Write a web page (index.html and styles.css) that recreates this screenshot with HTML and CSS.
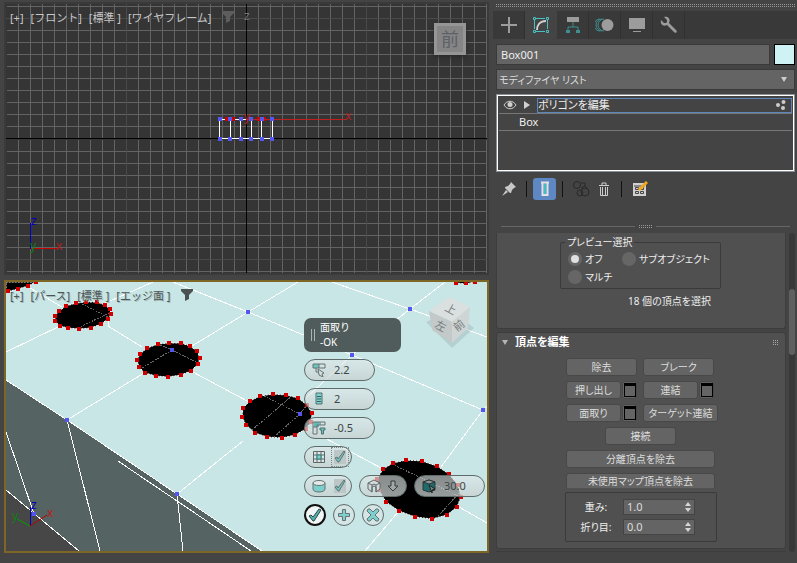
FILE: index.html
```html
<!DOCTYPE html>
<html lang="ja">
<head>
    <meta charset="UTF-8">
    <meta name="viewport" content="width=device-width, initial-scale=1.0">
    <title>ポリゴンを編集</title>
    <link rel="stylesheet" href="styles.css">
</head>
<body>
    <main class="viewports">
        <section class="viewport">
            <svg class="scene" viewBox="6 4 481 269" preserveAspectRatio="xMinYMin slice" shape-rendering="crispEdges">
                <defs>
                    <pattern id="grid-top" x="6" y="6" width="12" height="12" patternUnits="userSpaceOnUse">
                        <path d="M0 0h12v1H1v11H0z" fill="#636363"/>
                    </pattern>
                    <pattern id="grid-bottom" x="6" y="7" width="12" height="12" patternUnits="userSpaceOnUse">
                        <path d="M0 0h12v1H1v11H0z" fill="#636363"/>
                    </pattern>
                </defs>
                <rect x="7" y="4" width="480" height="135" fill="url(#grid-top)"/>
                <rect x="7" y="140" width="480" height="133" fill="url(#grid-bottom)"/>
                <path d="M126.5 4v269M366.5 4v269M6 18.5h481M6 259.5h481" stroke="#4a4a4a"/>
                <path d="M246.5 4v269M6 138.5h481" stroke="#000"/>
                <!-- box wireframe -->
                <path d="M219.5 119.5h53M219.5 138.5h53M219.5 119v20M230.5 119v20M240.5 119v20M251.5 119v20M261.5 119v20M272.5 119v20" stroke="#fff" fill="none"/>
                <path d="M225 119h10M257 119h9" stroke="#d00000" stroke-width="4"/>
                <path d="M246 119.5h100" stroke="#c02020"/>
                <path d="M220 119h0M230 119h0M241 119h0M251 119h0M262 119h0M272 119h0M220 138.5h0M230 138.5h0M241 138.5h0M251 138.5h0M262 138.5h0M272 138.5h0" class="vertex"/>
                <text x="244" y="121" class="axis red">y</text>
                <text x="345" y="120" class="axis red">x</text>
                <text x="244" y="20" class="axis grey">z</text>
                <path d="M30.5 223v26" stroke="#0000c8"/>
                <path d="M31 248.5h26" stroke="#c80000"/>
                <text x="31" y="225" class="axis blue">z</text>
                <text x="30" y="250" class="axis green">y</text>
                <text x="56" y="250" class="axis red">x</text>
            </svg>
            <div class="label">
                <span>[+]</span><span>[フロント]</span><span>[標準 ]</span><span>[ワイヤフレーム]</span>
                <svg width="12" height="12" viewBox="0 0 12 12"><path d="M0 0h12v2L8 6v4l-4 2V6L0 2z" fill="#5d5d5d"/></svg>
            </div>
            <div class="front-cube">前</div>
        </section>

        <section class="viewport active">
            <svg class="scene" viewBox="6 282 481 269" preserveAspectRatio="xMinYMin slice">
                <path d="M6 282h481v269H262L6 380z" fill="#c8e6e6"/>
                <path d="M6 380l256 171H79L6 490z" fill="#566363"/>
                <path d="M6 490l73 61H6z" fill="#474747"/>
                <g class="edges">
                    <path d="M6 380l61 40 110 74 85 57M6 490l73 61M118 461l133 90M67 420l33 131M177 494l6 57M6 432l28 82"/>
                    <path d="M30 288l32 19M101 305l52-23M60 326L6 352M108 320v6l34 21M192 346l56-34 50-30M173 282l75 30 104 43 131 55 4-4M332 282l78 27 77 28M352 355l58-46 35-27M352 355l-46 43M144 373l-77 47M191 371l58 31M243 441l-66 53M308 429l75 40M483 410l-42 57M459 507l28 16M399 511l-34 40"/>
                </g>
                <g fill="#000" stroke="#fff" stroke-dasharray="2 1">
                    <path d="M6 292l12-3 10-3 8-4H6z"/>
                    <path d="M453 281l3 2 10 1 9-2z"/>
                    <path d="M59 311l7-5 10-3 10-1h11l8 3 5 4 1 5-3 5-7 5-10 4-12 1-11-1-8-2-5-5v-5z"/>
                    <path d="M137 360l3-6 7-6 11-4 11-1h12l9 3 7 5 3 7-2 6-7 7-10 4-13 2-12-1-11-3-6-6z"/>
                    <path d="M243 408l7-7 10-5 13-2 13 1 12 3 9 7 5 8-1 9-5 7-11 6-13 3-15-1-12-4-9-8-4-8z"/>
                    <path d="M383 469l10-6 13-3 16 1 15 5 12 8 9 11 3 12-4 10-10 8-15 4-17-2-16-6-13-9-7-12-2-11z"/>
                </g>
                <path class="under" d="M82 304l26 13M78 328l31-15M160 345l12 5 26 13M172 350l-30 18M264 396l36 18M252 430l40-34M274 437l26-23 7-9M392 464l66 32M438 516l22-24"/>
                <path class="picked" d="M8 291h0M18 289h0M28 286h0M36 282h0M456 283h0M466 283h0M475 282h0
                    M59 311h0M66 306h0M76 303h0M86 302h0M97 302h0M105 305h0M110 309h0M111 314h0M108 319h0M101 324h0M91 328h0M79 329h0M68 328h0M60 326h0M55 321h0M55 316h0
                    M137 360h0M140 354h0M147 348h0M158 344h0M169 343h0M181 343h0M190 346h0M197 351h0M200 358h0M198 364h0M191 371h0M181 375h0M168 377h0M156 376h0M145 373h0M139 367h0
                    M243 408h0M250 401h0M260 396h0M273 394h0M286 395h0M298 398h0M307 405h0M312 413h0M311 422h0M306 429h0M295 435h0M282 438h0M267 437h0M255 433h0M246 425h0M242 417h0
                    M383 469h0M393 463h0M406 460h0M422 461h0M437 466h0M449 474h0M458 485h0M461 497h0M457 507h0M447 515h0M432 519h0M415 517h0M399 511h0M386 502h0M379 490h0M377 479h0"/>
                <path class="vertex" d="M67 420h0M177 494h0M248 312h0M172 350h0M352 355h0M410 309h0M483 410h0M300 414h0M34 514h0"/>
                <!-- view cube -->
                <path d="M426 322l26 26 22-20-22-18z" fill="#8fa5a5" opacity=".35"/>
                <path d="M449 297l21 10-18 15-23-11z" fill="#dadfdf"/>
                <path d="M429 311l23 11v21l-20-13z" fill="#c3c9c9"/>
                <path d="M470 307l-18 15v21l16-15z" fill="#cfd4d4"/>
                <text class="face" transform="translate(444 310) rotate(28)">上</text>
                <text class="face" transform="translate(434 327) rotate(28)">左</text>
                <text class="face" transform="translate(457 332) rotate(-38)">前</text>
                <path d="M30.5 507v19" stroke="#0000c8"/>
                <path d="M30 526l17-11" stroke="#b40000"/>
                <path d="M30 526l-13-7" stroke="#00a000"/>
                <text x="31" y="509" class="axis blue">z</text>
                <text x="12" y="520" class="axis green">y</text>
                <text x="47" y="517" class="axis red">x</text>
            </svg>
            <div class="label dark">
                <span>[+]</span><span>[パース]</span><span>[標準 ]</span><span>[エッジ面 ]</span>
                <svg width="12" height="12" viewBox="0 0 12 12"><path d="M0 0h12v2L8 6v4l-4 2V6L0 2z" fill="#4b5252"/></svg>
            </div>

            <form class="caddy">
                <div class="caddy-title">
                    <svg width="6" height="12" viewBox="0 0 6 12"><path d="M1.5 0v12M4.5 0v12" stroke="#aab2b2"/></svg>
                    <div><div>面取り</div><div>-OK</div></div>
                </div>
                <label class="pill">
                    <svg width="14" height="14" viewBox="0 0 14 14"><path d="M1 1h6v4H1z" fill="#6cc5c1"/><path d="M1 1h12v4H1zM7 1v4M4 5v4h3" fill="none" stroke="#667272"/><path d="M6 6l6 4-2 1 1 3-2-1-2-1z" fill="#d5dddd" stroke="#667272"/></svg>
                    <input type="text" value="2.2" aria-label="量">
                </label>
                <label class="pill">
                    <svg width="14" height="14" viewBox="0 0 14 14"><path d="M4 1h6v11H4z" fill="#7fd0cd" stroke="#52706f"/><path d="M5 4.5h4M5 7h4M5 9.5h4" stroke="#35605f"/></svg>
                    <input type="text" value="2" aria-label="セグメント">
                </label>
                <label class="pill">
                    <svg width="14" height="14" viewBox="0 0 14 14"><path d="M2 1h5v5H2z" fill="#5cbcb8"/><path d="M1 1h12v3H5v9H1zM1 6h4M8 1v3" fill="none" stroke="#667272"/><path d="M8 7h5v2h-1.5v4h-2V9H8z" fill="#6cc5c1" stroke="#52706f"/></svg>
                    <input type="text" value="-0.5" aria-label="深さ">
                </label>
                <label class="pill check">
                    <svg width="14" height="14" viewBox="0 0 14 14"><path d="M1.5 1.5h11v11h-11zM5 1v12M9 1v12M1 5h12M1 9h12" fill="#dde5e5" stroke="#5c6767"/><path d="M5 5h4v4H5z" fill="#7fd0cd" stroke="#2c8380"/></svg>
                    <input type="checkbox" checked aria-label="開く">
                    <span class="focus"><svg class="tick" width="12" height="14" viewBox="0 0 12 14"><path d="M1 8l2-1 1 2 6-8 1 1-6 10H4z" fill="#6cc5c1" stroke="#667272"/></svg></span>
                </label>
                <div class="caddy-row">
                    <label class="pill check">
                        <svg width="14" height="14" viewBox="0 0 14 14"><path d="M1 4v6c0 4 12 4 12 0V4" fill="#7ccfcc" stroke="#667272"/><ellipse cx="7" cy="4" rx="6" ry="2.5" fill="#e3e9e9" stroke="#667272"/></svg>
                        <input type="checkbox" checked aria-label="スムーズ">
                        <span><svg class="tick" width="12" height="14" viewBox="0 0 12 14"><path d="M1 8l2-1 1 2 6-8 1 1-6 10H4z" fill="#6cc5c1" stroke="#667272"/></svg></span>
                    </label>
                    <button type="button" class="pill check" aria-label="スムーズ タイプ">
                        <svg width="14" height="14" viewBox="0 0 14 14"><path d="M1 4l6-3 6 3v6l-4 3V8L7 7 5 8v5l-4-3zM1 4l4 2 2-1 2 1 4-2M5 6v7M9 6v7" fill="#d5dada" stroke="#5f6868"/></svg>
                        <svg width="14" height="14" viewBox="0 0 14 14"><path d="M5 2h4v5h3l-5 5-5-5h3z" fill="#a2a8a8" stroke="#333b3b"/></svg>
                    </button>
                    <label class="pill">
                        <svg width="14" height="14" viewBox="0 0 14 14"><path d="M1 3l6-2 6 2v8l-6 2-6-2z" fill="#1f6a6a" stroke="#2c3636"/><path d="M1 3l6 2 6-2-6-2z" fill="#8d9797" stroke="#2c3636"/><path d="M7 6l6 4-3 1v3z" fill="#7b8585" stroke="#222"/></svg>
                        <input type="text" value="30.0" aria-label="しきい値">
                    </label>
                </div>
                <div class="caddy-row">
                    <button type="button" class="round ok" aria-label="OK"><svg width="14" height="14" viewBox="0 0 14 14"><path d="M1 8l2-1 2 2 6-8 2 1-7 11H5z" fill="#4fb0ac" stroke="#2f4545"/></svg></button>
                    <button type="button" class="round" aria-label="適用"><svg width="14" height="14" viewBox="0 0 14 14"><path d="M5.5 1.5h3v4h4v3h-4v4h-3v-4h-4v-3h4z" fill="#7ccfcc" stroke="#667272"/></svg></button>
                    <button type="button" class="round" aria-label="キャンセル"><svg width="14" height="14" viewBox="0 0 14 14"><path d="M2 1h2l3 3 3-3h2l1 2-4 4 4 4-1 2h-2l-3-3-3 3H2l-1-2 4-4-4-4z" fill="#7ccfcc" stroke="#667272"/></svg></button>
                </div>
            </form>
        </section>
    </main>

    <aside class="panel">
        <div class="grip"></div>
        <nav class="tabs">
            <button type="button" aria-label="作成"><svg width="20" height="20" viewBox="0 0 20 20"><path d="M10 2v16M2 10h16" stroke="#9c9c9c" stroke-width="2"/></svg></button>
            <button type="button" class="selected" aria-label="修正"><svg width="20" height="20" viewBox="0 0 20 20"><path d="M5 3.5h9M5 16.5h9M3.5 5v9M16.5 5v9M2.500 2.500h2v2h-2zM15.500 2.500h2v2h-2zM2.500 15.500h2v2h-2zM15.500 15.500h2v2h-2z" fill="none" stroke="#45c2c2"/><path d="M6 15c0-5 3-9 9-9" fill="none" stroke="#d2d2d2" stroke-width="2"/></svg></button>
            <button type="button" aria-label="階層"><svg width="20" height="20" viewBox="0 0 20 20"><path d="M4 2h12v5H4z" fill="#9c9c9c"/><path d="M10 7v5M5 16v-4h10v4" fill="none" stroke="#3d8f8f"/><path d="M3 15h4v3H3zM13 15h4v3h-4z" fill="#3d8f8f"/></svg></button>
            <button type="button" aria-label="モーション"><svg width="20" height="20" viewBox="0 0 20 20"><path d="M7 4a6 6 0 0 0 0 12M5 4a6 6 0 0 0 0 12M9 4a6 6 0 0 0 0 12" fill="none" stroke="#3d8f8f"/><circle cx="12.5" cy="10" r="6" fill="#9c9c9c"/></svg></button>
            <button type="button" aria-label="表示"><svg width="20" height="20" viewBox="0 0 20 20"><path d="M2 3h16v11H2zM6 16h8v1H6z" fill="#9c9c9c"/></svg></button>
            <button type="button" aria-label="ユーティリティ"><svg width="20" height="20" viewBox="0 0 20 20"><path d="M5 2l3 3v2L7 8H5L2 5c-1 4 2 7 6 5l7 7c2 2 4 0 2-2l-7-7c2-4-1-7-5-6z" fill="#9c9c9c"/></svg></button>
        </nav>
        <div class="name-row">
            <input type="text" value="Box001" aria-label="オブジェクト名">
            <button type="button" class="swatch" aria-label="オブジェクト カラー"></button>
        </div>
        <div class="select-wrap">
            <select class="kana" aria-label="モディファイヤ リスト"><option>モディファイヤ リスト</option></select>
        </div>
        <ul class="stack">
            <li>
                <svg width="14" height="10" viewBox="0 0 14 10"><path d="M1 5c3-5 9-5 12 0-3 5-9 5-12 0z" fill="none" stroke="#d0d0d0"/><circle cx="7" cy="4.5" r="2.5" fill="#d0d0d0"/></svg>
                <svg width="6" height="8" viewBox="0 0 6 8"><path d="M0 0l6 4-6 4z" fill="#d0d0d0"/></svg>
                <span class="current kana">ポリゴンを編集
                    <svg width="12" height="10" viewBox="0 0 12 10"><circle cx="3" cy="5" r="2"/><circle cx="8.5" cy="2" r="2"/><circle cx="8" cy="8" r="2"/></svg>
                </span>
            </li>
            <li class="base">Box</li>
        </ul>
        <div class="tools">
            <button type="button" aria-label="ピン"><svg width="16" height="16" viewBox="0 0 16 16"><path d="M10 1l5 5-2 1-2 2-1 3-1 0-5-5 0-1 3-1 2-2zM5 9l-4 6 6-4z" fill="#c8c8c8"/></svg></button>
            <i></i>
            <button type="button" class="on" aria-label="最終結果を表示"><svg width="16" height="16" viewBox="0 0 16 16"><path d="M4 1.5h8M5.5 2v12h5V2" fill="none" stroke="#e2e2e2" stroke-width="2"/><path d="M7 3h2v10H7z" fill="#3fc0c0"/></svg></button>
            <i></i>
            <button type="button" aria-label="固有にする"><svg width="18" height="18" viewBox="0 0 18 18" fill="none" stroke="#292929"><circle cx="5" cy="5" r="3.5"/><circle cx="8" cy="13" r="3"/><circle cx="13" cy="12" r="4"/><path d="M9 3h4v3l2 2M9 8l4-2"/></svg></button>
            <button type="button" aria-label="削除"><svg width="12" height="16" viewBox="0 0 12 16"><path d="M1 4.5h10M4 4V2h4v2M2.500 6v8.500h7V6M4.500 6v8M7.500 6v8" fill="none" stroke="#cdcdcd"/></svg></button>
            <i></i>
            <button type="button" aria-label="セットを設定"><svg width="16" height="16" viewBox="0 0 16 16"><path d="M1 2h13v13H1z" fill="#d0d0d0"/><path d="M2 5h11M3.500 6.500h3v2h-3zM8.500 6.500h3v2h-3zM3.500 10.500h3v2h-3zM8.500 10.500h3v2h-3z" stroke="#444" fill="none"/><path d="M15 1l-8 8" stroke="#f2a818" stroke-width="3"/></svg></button>
        </div>
        <div class="splitter"><b></b></div>

        <div class="rollouts">
            <div class="cards">
                <section class="card preview kana">
                    <fieldset>
                        <legend>プレビュー選択</legend>
                        <label><input type="radio" name="preview" checked>オフ</label>
                        <label><input type="radio" name="preview">サブオブジェクト</label>
                        <label><input type="radio" name="preview">マルチ</label>
                    </fieldset>
                    <p>18 個の頂点を選択</p>
                </section>
                <section class="card edit kana">
                    <h2><svg width="6" height="5" viewBox="0 0 6 5"><path d="M0 0h6L3 5z" fill="#b5b5b5"/></svg>頂点を編集<b class="dots"></b></h2>
                    <div class="commands">
                        <div class="row"><button type="button" class="wide">除去</button><button type="button" class="wide">ブレーク</button></div>
                        <div class="row">
                            <div class="pair"><button type="button">押し出し</button><button type="button" class="settings" aria-label="押し出し設定"></button></div>
                            <div class="pair"><button type="button">連結</button><button type="button" class="settings" aria-label="連結設定"></button></div>
                        </div>
                        <div class="row">
                            <div class="pair"><button type="button">面取り</button><button type="button" class="settings" aria-label="面取り設定"></button></div>
                            <button type="button" class="target">ターゲット連結</button>
                        </div>
                        <div class="row center"><button type="button" class="wide">接続</button></div>
                        <button type="button">分離頂点を除去</button>
                        <button type="button" class="cut">未使用マップ頂点を除去</button>
                    </div>
                    <div class="weights">
                        <label for="weight">重み:</label>
                        <div class="spinner"><input type="text" id="weight" value="1.0"><svg width="6" height="10" viewBox="0 0 6 10"><path d="M0 4l3-4 3 4zM0 6l3 4 3-4z" fill="#d5d5d5"/></svg></div>
                        <label for="crease">折り目:</label>
                        <div class="spinner"><input type="text" id="crease" value="0.0"><svg width="6" height="10" viewBox="0 0 6 10"><path d="M0 4l3-4 3 4zM0 6l3 4 3-4z" fill="#d5d5d5"/></svg></div>
                    </div>
                </section>
            </div>
            <div class="scrollbar"><div></div></div>
        </div>
    </aside>
</body>
</html>
```
FILE: styles.css
```css
* {
    box-sizing: border-box;
}

body {
    margin: 0;
    display: grid;
    grid-template-columns: 1fr 308px;
    height: 100vh;
    background: #444;
    color: #eee;
    font: 11px/14px "Noto Sans", "Noto Sans CJK JP", sans-serif;
}

svg {
    display: block;
    flex: none;
}

button, input, select {
    margin: 0;
    padding: 0;
    border: 0;
    background: none;
    color: inherit;
    font: inherit;
}

.kana {
    font-feature-settings: "palt";
}

/* viewports */
.viewports {
    display: grid;
    grid-template-rows: 1fr 1fr;
    gap: 5px;
    padding: 2px 0 10px 4px;
    min-height: 0;
}

.viewport {
    position: relative;
    min-height: 0;
    overflow: hidden;
    border: 2px solid #3a3a3a;
    background: #353535;
}

.viewport.active {
    border-color: #7d6626;
}

.scene {
    width: 100%;
    height: 100%;
}

.vertex, .picked {
    fill: none;
    stroke: #5555f0;
    stroke-width: 4px;
    stroke-linecap: square;
    shape-rendering: crispEdges;
}

.picked {
    stroke: #d00000;
}

.edges, .under {
    fill: none;
    stroke: #fff;
    shape-rendering: crispEdges;
}

.under {
    stroke: #666;
    stroke-dasharray: 2 1;
}

.axis {
    font-size: 12px;
}

.red { fill: #b82020; }
.blue { fill: #0000b4; }
.green { fill: #108010; }
.grey { fill: #777; }

.face {
    font-size: 11px;
    fill: #747b7b;
}

.label {
    position: absolute;
    top: 7px;
    left: 4px;
    display: flex;
    gap: 7px;
    color: #c8c8c8;
}

.label svg {
    margin-left: 4px;
}

.label.dark {
    color: #4c5555;
    text-shadow: 1px 1px #a5b8b8;
}

.front-cube {
    position: absolute;
    top: 19px;
    right: 21px;
    width: 32px;
    height: 32px;
    border: 3px solid #969696;
    background: #858585;
    box-shadow: 0 2px 4px #2a2a2a;
    color: #5c6068;
    font-size: 18px;
    line-height: 26px;
    text-align: center;
}

.caddy {
    position: absolute;
    top: 36px;
    left: 298px;
    display: flex;
    flex-direction: column;
    align-items: flex-start;
    gap: 7px;
}

.caddy-title {
    display: flex;
    align-items: center;
    gap: 4px;
    width: 97px;
    height: 34px;
    padding-left: 6px;
    border-radius: 7px;
    background: rgba(72, 82, 83, .94);
    color: #fff;
    font-size: 10px;
    line-height: 15px;
}

.caddy-row {
    display: flex;
    gap: 7px;
}

.pill {
    display: flex;
    align-items: center;
    gap: 8px;
    width: 71px;
    height: 22px;
    padding-left: 7px;
    border: 1px solid #5f6b6b;
    border-radius: 11px;
    background: linear-gradient(rgba(225, 232, 232, .6), rgba(200, 208, 208, .75));
    color: #3c4646;
}

.pill input[type=text] {
    width: 36px;
}

.pill.check {
    gap: 5px;
    width: 48px;
}

.pill input[type=checkbox] {
    position: absolute;
    opacity: 0;
}

.pill span {
    display: grid;
    place-items: center;
    width: 18px;
    height: 20px;
}

.pill .focus {
    border: 1px dotted #7d8989;
}

.tick {
    visibility: hidden;
    background: #bcc6c6;
}

input:checked + span .tick {
    visibility: visible;
}

.round {
    display: grid;
    place-items: center;
    width: 22px;
    height: 22px;
    border: 1px solid #5f6b6b;
    border-radius: 50%;
    background: rgba(218, 226, 226, .7);
}

.round.ok {
    border: 2px solid #111;
    background: #f2f5f5;
}

/* command panel */
.panel {
    display: flex;
    flex-direction: column;
    min-height: 0;
    padding: 4px 2px 11px 7px;
}

.grip, .splitter b {
    height: 3px;
    background:
        repeating-linear-gradient(transparent 0 1px, #444 1px 2px),
        repeating-linear-gradient(90deg, #999 0 1px, #444 1px 2px);
}

.tabs {
    display: flex;
    height: 28px;
    margin: 4px -2px 5px -3px;
    background: #393939;
}

.tabs button {
    display: grid;
    place-items: center;
    width: 32px;
    border-right: 1px solid #303030;
}

.tabs .selected {
    background: #444;
    border-color: #444;
}

.name-row {
    display: flex;
    gap: 4px;
    height: 21px;
}

.name-row input {
    flex: 1;
    min-width: 0;
    padding-left: 4px;
    border: 1px solid #3a3a3a;
    background: #646464;
}

.swatch {
    width: 21px;
    border: 1px solid #000;
    background: #cff2f4;
}

.select-wrap {
    position: relative;
    margin: 4px 0;
}

.select-wrap select {
    display: block;
    width: 100%;
    height: 21px;
    padding-left: 2px;
    border: 1px solid #3a3a3a;
    background: #646464;
    color: #ddd;
    font-size: 10px;
    appearance: none;
}

.select-wrap::after {
    content: "";
    position: absolute;
    top: 8px;
    right: 8px;
    border: 3px solid transparent;
    border-top: 5px solid #ccc;
    border-bottom: 0;
}

.stack {
    height: 78px;
    margin: 0;
    padding: 2px;
    border: 1px solid #8a9098;
    outline: 1px solid #fff;
    outline-offset: -2px;
    list-style: none;
}

.stack li {
    display: flex;
    align-items: center;
    gap: 7px;
    height: 17px;
    padding-left: 4px;
    border-bottom: 1px solid #777;
}

.stack .base {
    padding-left: 20px;
}

.current {
    flex: 1;
    display: flex;
    align-items: center;
    justify-content: space-between;
    height: 15px;
    padding-right: 4px;
    border: 1px solid #5d86bd;
}

.current svg {
    fill: #ccc;
}

.tools {
    display: flex;
    align-items: center;
    height: 22px;
    margin-top: 6px;
    padding-left: 1px;
}

.tools button {
    display: grid;
    place-items: center;
    width: 23px;
    height: 22px;
    border-radius: 3px;
}

.tools i {
    width: 1px;
    height: 16px;
    margin: 0 6px;
    background: #111;
}

.tools .on {
    background: #5d88c4;
}

.splitter {
    display: flex;
    align-items: center;
    gap: 4px;
    height: 4px;
    margin: 24px 5px 5px;
}

.splitter::before, .splitter::after {
    content: "";
    flex: 1;
    height: 1px;
    background: #666;
}

.splitter b {
    width: 13px;
}

.rollouts {
    flex: 1;
    display: flex;
    gap: 3px;
    min-height: 0;
    overflow: hidden;
}

.cards {
    flex: 1;
    display: flex;
    flex-direction: column;
    gap: 3px;
    border-bottom: 1px solid #3c3c3c;
}

.card {
    border: 1px solid #3d3d3d;
    border-radius: 3px;
    background: #505050;
    font-size: 10px;
}

.preview {
    height: 96px;
    padding: 2px 0 0 63px;
    border-top: 0;
    border-radius: 0 0 3px 3px;
}

fieldset {
    display: grid;
    grid-template-columns: 54px auto;
    width: 161px;
    height: 54px;
    margin: 0;
    padding: 2px 7px;
    border: 1px solid #3a3a3a;
    border-radius: 2px;
}

legend {
    margin-left: -3px;
    padding: 0 2px;
}

fieldset label {
    display: flex;
    align-items: center;
    gap: 3px;
    height: 16px;
    white-space: nowrap;
}

input[type=radio] {
    width: 14px;
    height: 14px;
    border: 3px solid #666;
    border-radius: 50%;
    background: #666;
    appearance: none;
}

input[type=radio]:checked {
    background: #e0e0e0;
}

.preview p {
    margin: 5px 0 0 68px;
}

.edit {
    height: 217px;
}

h2 {
    display: flex;
    align-items: center;
    gap: 7px;
    height: 18px;
    margin: 0 7px 7px 5px;
    color: #fff;
    font: inherit;
    font-size: 11px;
    font-weight: bold;
}

.dots {
    width: 5px;
    height: 5px;
    margin-left: auto;
    background:
        repeating-linear-gradient(transparent 0 1px, #505050 1px 2px),
        repeating-linear-gradient(90deg, #aaa 0 1px, #505050 1px 2px);
}

.commands {
    display: flex;
    flex-direction: column;
    gap: 5px;
    width: 149px;
    margin-left: 69px;
}

.commands button {
    height: 18px;
    border: 1px solid #484848;
    border-radius: 3px;
    background: #646464;
    color: #ddd;
    line-height: 14px;
    white-space: nowrap;
}

.row {
    display: flex;
    gap: 6px;
}

.row.center {
    justify-content: center;
}

.commands .wide {
    width: 71px;
}

.pair {
    display: flex;
    gap: 1px;
}

.pair button {
    width: 55px;
}

.pair .settings {
    display: grid;
    place-items: center;
    width: 15px;
}

.settings::before {
    content: "";
    width: 10px;
    height: 10px;
    border: 1px solid #000;
    border-top-width: 3px;
    background: #646464;
}

.target {
    flex: none;
    width: 75px;
}

.commands .cut {
    height: 15px;
    border-bottom: 0;
    border-radius: 3px 3px 0 0;
}

.weights {
    display: grid;
    grid-template-columns: 46px 72px;
    align-items: center;
    justify-items: center;
    gap: 3px 4px;
    width: 152px;
    height: 50px;
    margin: 4px 0 0 68px;
    padding: 5px 7px;
    border: 1px solid #3a3a3a;
    border-radius: 2px;
}

.spinner {
    display: flex;
    align-items: center;
    width: 72px;
    height: 16px;
    padding: 0 3px;
    border: 1px solid #444;
    background: #646464;
    color: #ddd;
    font-size: 11px;
}

.spinner input {
    flex: 1;
    min-width: 0;
}

.scrollbar {
    width: 6px;
    padding-top: 56px;
    border-radius: 3px;
    background: #383838;
}

.scrollbar div {
    height: 66px;
    border-radius: 3px;
    background: #606060;
}
```
